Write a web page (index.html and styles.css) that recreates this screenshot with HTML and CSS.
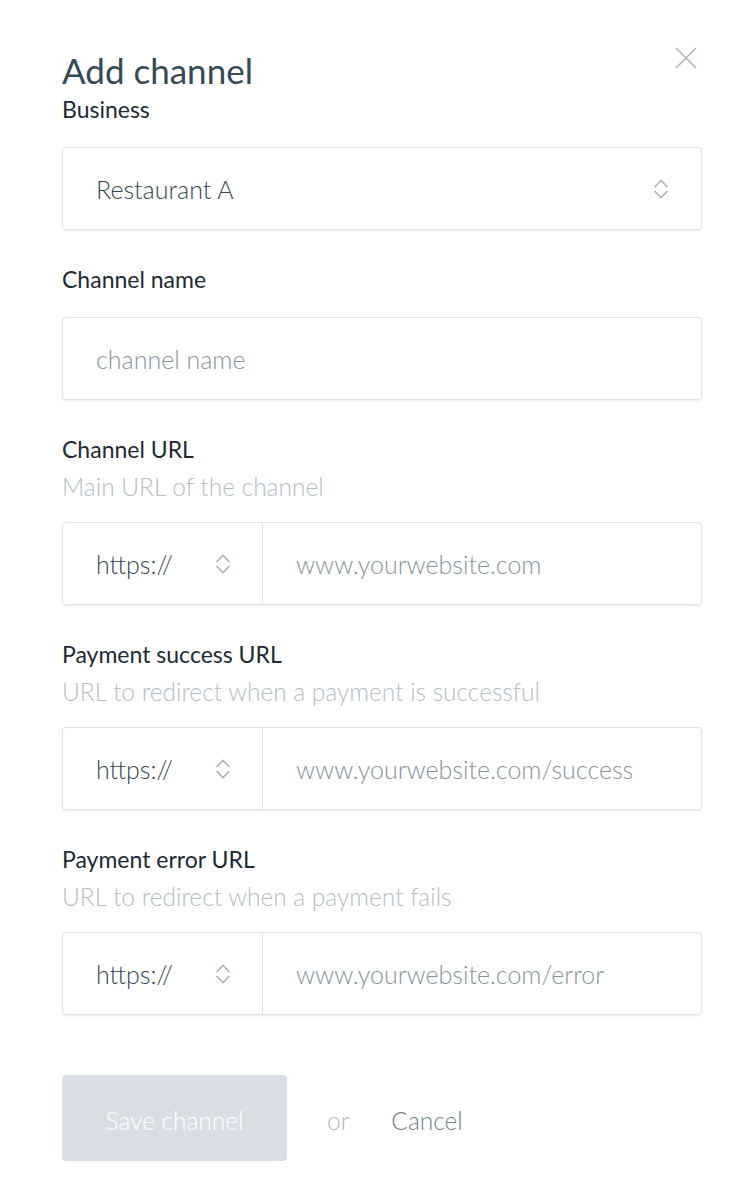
FILE: index.html
```html
<!DOCTYPE html>
<html>
<head>
<meta charset="utf-8">
<link rel="stylesheet" href="styles.css">
</head>
<body>
<div class="modal">
  <button class="close" aria-label="Close">
    <svg width="22" height="22" viewBox="0 0 22 22"><path d="M1 1 L21 21 M21 1 L1 21" stroke="#a9b5bc" stroke-width="1.6" fill="none"/></svg>
  </button>
  <h1 class="title">Add channel</h1>

  <div class="field first">
    <div class="label">Business</div>
    <div class="box select">
      <span class="value">Restaurant A</span>
      <svg class="chev" width="16" height="22" viewBox="0 0 16 22"><path d="M1.5 9 L8 2.5 L14.5 9 M1.5 13 L8 19.5 L14.5 13" stroke="#a9b5bc" stroke-width="1.6" fill="none"/></svg>
    </div>
  </div>

  <div class="field">
    <div class="label">Channel name</div>
    <div class="box">
      <span class="placeholder">channel name</span>
    </div>
  </div>

  <div class="field">
    <div class="label">Channel URL</div>
    <div class="help">Main URL of the channel</div>
    <div class="box url">
      <div class="prefix">
        <span class="value">https://</span>
        <svg class="chev" width="16" height="22" viewBox="0 0 16 22"><path d="M1.5 9 L8 2.5 L14.5 9 M1.5 13 L8 19.5 L14.5 13" stroke="#a9b5bc" stroke-width="1.6" fill="none"/></svg>
      </div>
      <div class="rest"><span class="placeholder">www.yourwebsite.com</span></div>
    </div>
  </div>

  <div class="field">
    <div class="label">Payment success URL</div>
    <div class="help">URL to redirect when a payment is successful</div>
    <div class="box url">
      <div class="prefix">
        <span class="value">https://</span>
        <svg class="chev" width="16" height="22" viewBox="0 0 16 22"><path d="M1.5 9 L8 2.5 L14.5 9 M1.5 13 L8 19.5 L14.5 13" stroke="#a9b5bc" stroke-width="1.6" fill="none"/></svg>
      </div>
      <div class="rest"><span class="placeholder">www.yourwebsite.com/success</span></div>
    </div>
  </div>

  <div class="field">
    <div class="label">Payment error URL</div>
    <div class="help">URL to redirect when a payment fails</div>
    <div class="box url">
      <div class="prefix">
        <span class="value">https://</span>
        <svg class="chev" width="16" height="22" viewBox="0 0 16 22"><path d="M1.5 9 L8 2.5 L14.5 9 M1.5 13 L8 19.5 L14.5 13" stroke="#a9b5bc" stroke-width="1.6" fill="none"/></svg>
      </div>
      <div class="rest"><span class="placeholder">www.yourwebsite.com/error</span></div>
    </div>
  </div>

  <div class="actions">
    <button class="save">Save channel</button>
    <span class="or">or</span>
    <span class="cancel">Cancel</span>
  </div>
</div>
</body>
</html>
```

FILE: styles.css
```css
* { box-sizing: border-box; }
html, body { margin: 0; padding: 0; background: #fff; }
body { font-family: Lato, "Noto Sans", sans-serif; }

.modal {
  position: relative;
  width: 750px;
  padding: 50px 48px 0 62px;
}

.close {
  position: absolute;
  top: 47px;
  left: 675px;
  border: 0;
  background: none;
  padding: 0;
  width: 22px;
  height: 22px;
}
.close svg { display: block; }

.title {
  margin: 0;
  font-size: 35px;
  line-height: 40px;
  font-weight: 400;
  color: #344a56;
}

.field { margin-top: 34px; }
.field.first { margin-top: 4px; }

.label {
  font-size: 23px;
  line-height: 30px;
  color: #1d2a33;
  margin-bottom: 23px;
}
.help {
  font-size: 24.5px;
  line-height: 30px;
  font-weight: 300;
  color: #b3bec4;
  margin-top: -15px;
  margin-bottom: 20px;
}

.box {
  width: 640px;
  height: 83px;
  border: 1px solid #dce4e8;
  border-radius: 4px;
  box-shadow: 0 1px 2px rgba(40, 60, 75, 0.10);
  display: flex;
  align-items: center;
  padding: 1px 32px 0 33px;
  font-size: 25px;
  font-weight: 300;
}
.select { justify-content: space-between; }
.value { color: #34454f; }
.placeholder { color: #86949c; }
.chev { display: block; }

.url { padding: 0; }
.prefix {
  width: 200px;
  height: 100%;
  border-right: 1px solid #dce4e8;
  display: flex;
  align-items: center;
  justify-content: space-between;
  padding: 0 31px 0 33px;
}
.rest {
  flex: 1;
  padding-left: 33px;
}

.actions {
  margin-top: 60px;
  display: flex;
  align-items: center;
}
.save {
  width: 225px;
  height: 86px;
  border: 0;
  border-radius: 4px;
  background: #d9dee5;
  color: #fff;
  font-family: inherit;
  font-size: 24.5px;
  font-weight: 300;
  padding: 4px 0 0;
}
.or {
  margin-left: 40px;
  margin-top: 4px;
  font-size: 24.5px;
  font-weight: 300;
  color: #aeb8bf;
}
.cancel {
  margin-left: 42px;
  margin-top: 4px;
  font-size: 24.5px;
  font-weight: 300;
  color: #6f828d;
}
```
